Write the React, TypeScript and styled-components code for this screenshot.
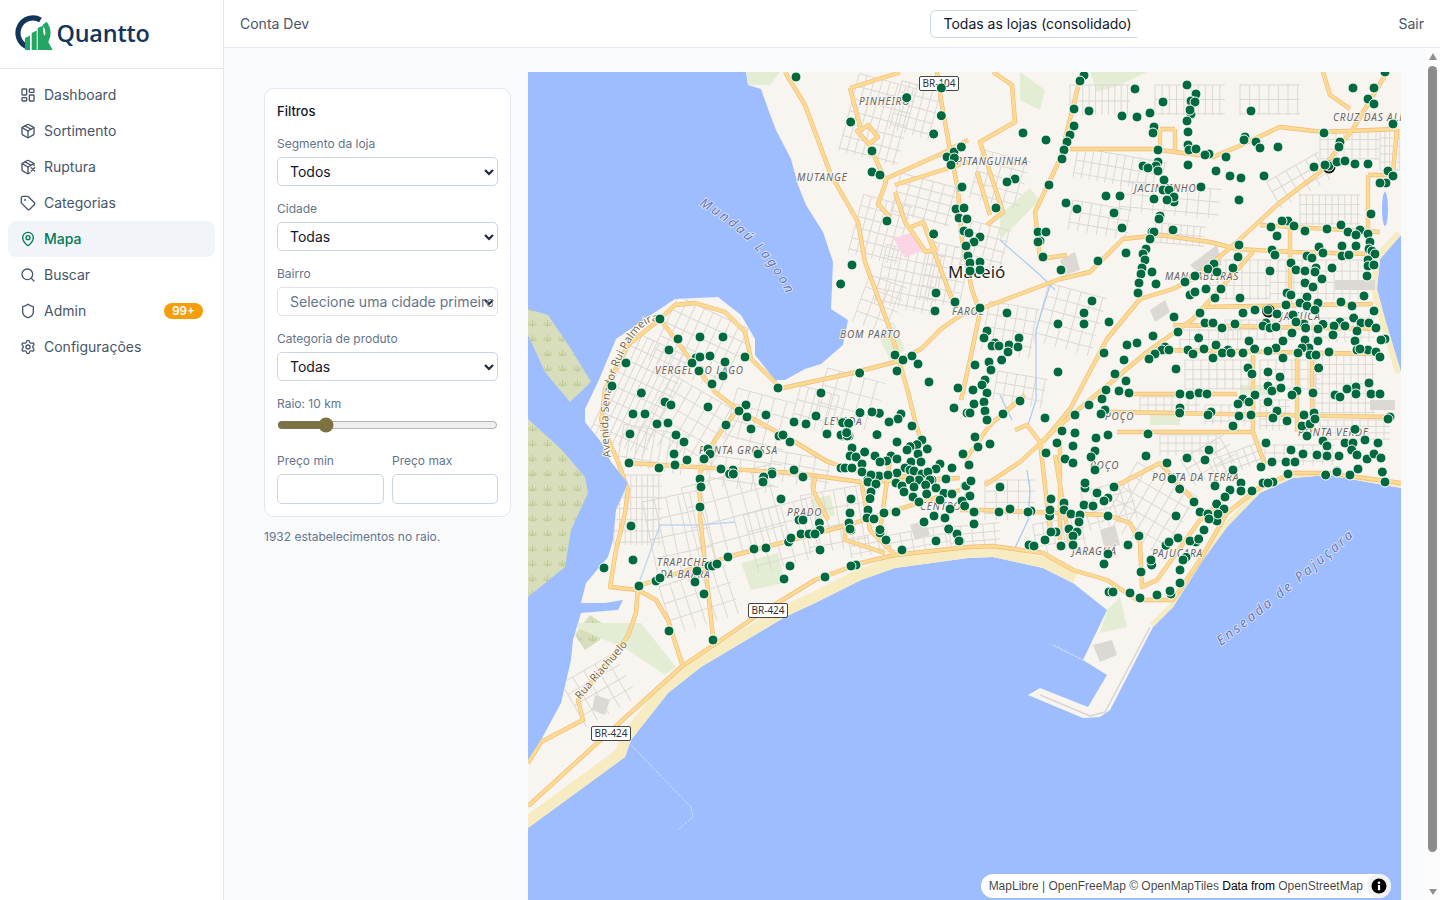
import React, { useMemo } from "react";
import styled, { createGlobalStyle } from "styled-components";
import { LayoutDashboard, Package, PackageX, Tag, MapPin, Search, Shield, Settings } from "lucide-react";

const chevron = `url("data:image/svg+xml,%3Csvg xmlns='http://www.w3.org/2000/svg' width='12' height='12' viewBox='0 0 12 12'%3E%3Cpath d='M2 4l4 4 4-4' fill='none' stroke='%231e293b' stroke-width='2.2'/%3E%3C/svg%3E")`;

const Global = createGlobalStyle`
  html, body { margin: 0; height: 100%; overflow: hidden; }
  body { font-family: Inter, "Liberation Sans", sans-serif; background: #f8fafc; color: #0f172a; }
  #root { height: 100vh; }
  * { box-sizing: border-box; }
`;

const Shell = styled.div`display: flex; height: 100vh;`;
const Sidebar = styled.aside`
  width: 224px; flex: none; background: #fff; border-right: 1px solid #e2e8f0;
`;
const Brand = styled.div`
  height: 69px; border-bottom: 1px solid #e2e8f0; display: flex; align-items: center; padding: 0 0 2px 14px; gap: 3px;
`;
const BrandName = styled.span`
  font-family: "Open Sans", Inter, sans-serif; font-weight: 600; font-size: 23.4px; color: #12355b; letter-spacing: -0.2px; margin-left: -0.5px;
`;
const Nav = styled.nav`display: flex; flex-direction: column; padding: 8px;`;
const NavItem = styled.a<{ $active?: boolean }>`
  height: 36px; display: flex; align-items: center; gap: 8px; padding: 0 12px; border-radius: 8px;
  font-size: 14px; color: ${p => (p.$active ? "#047857" : "#475569")}; font-weight: ${p => (p.$active ? 500 : 400)};
  background: ${p => (p.$active ? "#f1f5f9" : "transparent")};
`;
const NavLabel = styled.span`margin-bottom: 2px;`;
const Badge = styled.span`
  margin-left: auto; background: #f59e0b; color: #fff; font-size: 11.5px; font-weight: 600; line-height: 16px;
  height: 16px; width: 39px; border-radius: 8px; text-align: center;
`;
const Column = styled.div`position: relative; flex: 1; min-width: 0; display: flex; flex-direction: column;`;
const Header = styled.header`
  height: 48px; flex: none; background: #fff; border-bottom: 1px solid #e2e8f0; display: flex; align-items: center; padding: 0 16px;
  font-size: 14px; color: #475569;
`;
const StoreClip = styled.div`margin-left: auto; margin-right: 261px; width: 207px; overflow: hidden; height: 28px;`;
const StoreBox = styled.div`
  width: 240px; height: 28px; border: 1px solid #cbd5e1; border-radius: 6px; padding: 0 12px; line-height: 26px;
  font-size: 14px; color: #0f172a; white-space: nowrap; background: #fff;
`;
const Main = styled.main`flex: 1; min-height: 0; overflow: hidden;`;
const Content = styled.div`display: flex; align-items: flex-start; gap: 17px; padding: 24px 24px 29px 40px;`;
const Aside = styled.div`width: 247px; flex: none; margin-top: 16px;`;
const Card = styled.section`
  background: #fff; border: 1px solid #e2e8f0; border-radius: 10px; padding: 12px; height: 429px;
`;
const CardTitle = styled.div`font-size: 13px; font-weight: 500; color: #0f172a; line-height: 20px; margin: 0 0 15px;`;
const Field = styled.label`display: block; margin-bottom: 15px;`;
const FieldLabel = styled.div`font-size: 12px; color: #64748b; line-height: 16px; margin-bottom: 5px;`;
const Select = styled.select`
  display: block; width: 100%; height: 29px; border: 1px solid #cbd5e1; border-radius: 5px; padding: 0 4px 0 12px;
  font: 400 14px Inter, sans-serif; color: #0f172a; opacity: 1; appearance: none;
  background: #fff ${chevron} no-repeat right 2px center;
  &:disabled { color: #64748b; border-color: #dde3ea; }
`;
const Range = styled.input`display: block; width: 100%; margin: 5px 0 0; height: 16px; accent-color: #7d7340;`;
const PriceRow = styled.div`display: grid; grid-template-columns: 107px 106px; gap: 8px; margin-top: 20px;`;
const PriceInput = styled.input`
  display: block; width: 100%; height: 30px; border: 1px solid #cbd5e1; border-radius: 5px; background: #fff;
`;
const Note = styled.p`font-size: 12px; color: #64748b; margin: 12px 0 0; line-height: 16px;`;
const MapFrame = styled.div`position: relative; width: 873px; flex: none; height: 836px; overflow: hidden; background: #9ebdff;`;
const MapSvg = styled.svg`display: block; width: 873px; height: 836px;`;
const Attribution = styled.div`
  position: absolute; right: 10px; bottom: 10px; height: 24px; border-radius: 12px; background: #fff; display: flex; align-items: center;
  padding-left: 8px; font: 12px/20px "Liberation Sans", Arial, sans-serif; color: rgba(0,0,0,.75); white-space: pre;
`;
const Strong = styled.span`color: #000;`;
const InfoButton = styled.span`
  width: 24px; height: 24px; border-radius: 50%; margin-left: 4px; background: #f2f2f2; display: flex; align-items: center; justify-content: center;
`;
const Scrollbar = styled.div`
  position: absolute; top: 48px; right: 0; bottom: 0; width: 15px; background: #fcfcfc;
  display: flex; flex-direction: column; align-items: center;
`;
const ScrollArrow = styled.span<{ $down?: boolean }>`
  width: 0; height: 0; flex: none; margin: ${p => (p.$down ? "auto 0 5px" : "5px 0 6px")};
  border-left: 4.5px solid transparent; border-right: 4.5px solid transparent;
  ${p => (p.$down ? "border-top: 6px solid #8f8f8f;" : "border-bottom: 7px solid #8f8f8f;")}
`;
const ScrollThumb = styled.span`width: 9px; height: 786px; flex: none; border-radius: 5px; background: #8c8c8c;`;

const navItems = [
  { label: "Dashboard", Icon: LayoutDashboard },
  { label: "Sortimento", Icon: Package },
  { label: "Ruptura", Icon: PackageX },
  { label: "Categorias", Icon: Tag },
  { label: "Mapa", Icon: MapPin, active: true },
  { label: "Buscar", Icon: Search },
  { label: "Admin", Icon: Shield, badge: "99+" },
  { label: "Configurações", Icon: Settings },
];

const Logo = () => (
  <svg width="40" height="40" viewBox="0 0 40 40">
    <path d="M12.7 33.6A15 15 0 1 1 26.5 7" fill="none" stroke="#12355b" strokeWidth="5.2" />
    <path d="M30.5 10.4A15 15 0 0 1 30.5 29.6" fill="none" stroke="#22a565" strokeWidth="5.2" />
    <path d="M11 37V25l5-2.5V37zM17.7 37V20l5-2.5V37zM23.7 37V15l5.6-2.5V20L38.7 37H29.3z" fill="#22a565" />
  </svg>
);

const street: [number, number, number, number, number, number, number][] = [
  [640,395,60,110,25,8,18],[700,345,80,70,25,12,18],[690,425,80,70,30,14,18],[655,450,70,40,10,10,40],
  [638,510,48,70,0,7,14],[680,535,60,80,-12,15,24],[735,515,90,80,-15,18,26],[785,535,70,60,-15,16,22],[700,600,70,50,-18,14,22],[835,520,60,60,-10,14,22],
  [760,420,60,50,15,16,20],[800,470,60,30,10,18,14],[745,475,70,30,8,18,14],[850,400,60,50,15,16,22],[815,410,40,40,15,10,18],
  [878,120,60,80,15,10,16],[915,110,40,50,15,10,14],[880,230,50,60,15,10,14],[925,200,60,40,15,14,12],[910,280,60,60,12,10,14],[945,275,40,60,12,10,14],[880,305,40,50,20,14,16],
  [1000,180,50,50,15,14,14],[985,250,40,50,15,12,14],[1100,100,60,30,0,8,20],[1190,100,70,30,0,9,18],[1120,170,90,30,10,10,16],[1170,200,100,30,5,14,16],[1270,100,60,30,0,12,18],
  [1100,220,60,30,10,12,14],[1070,320,60,60,15,14,16],[1010,330,50,50,10,12,16],[1020,390,50,30,10,12,14],[1180,235,50,20,5,8,12],
  [1330,210,60,30,0,8,12],[1300,180,60,30,-30,14,14],[1390,150,20,40,0,6,10],[1350,145,60,30,0,10,12],
  [1320,280,100,40,0,10,14],[1240,280,60,40,0,10,16],[1260,330,70,20,0,10,12],[1340,330,70,24,0,10,12],[1210,340,60,20,0,12,12],
  [1220,375,70,30,0,10,12],[1290,375,60,30,0,10,12],[1345,385,60,60,0,9,12],[1170,405,60,16,0,10,10],[1230,415,50,20,0,10,10],[1275,415,30,30,0,8,8],[1355,430,70,20,0,10,8],
  [1210,460,50,30,-30,14,14],[1150,510,70,70,30,14,18],[1190,445,60,20,0,10,10],[1110,505,50,40,-15,12,14],[1060,535,50,30,-10,12,14],[1010,500,50,40,0,14,14],
  [1240,460,50,20,-20,10,10],[1300,455,70,20,0,12,10],[920,540,60,20,-10,14,10],[975,535,50,20,-5,14,10],[600,690,60,50,-30,16,16],[870,545,40,20,-10,12,10],
];

const streetPaths = () =>
  street.map(([cx, cy, w, h, a, sx, sy], i) => {
    let d = "";
    for (let x = -w / 2; x <= w / 2; x += sx * 0.8) d += `M${x} ${-h / 2}V${h / 2}`;
    for (let y = -h / 2; y <= h / 2; y += sy * 0.8) d += `M${-w / 2} ${y}H${w / 2}`;
    return <path key={i} d={d} transform={`translate(${cx} ${cy}) rotate(${a})`} fill="none" stroke="#dcd8d3" strokeWidth="1" />;
  });

const primary = [
  "M785 72L805 105L831 175L858 222L865 262L891 332L908 392L916 425L925 450",
  "M937 72L941 100L950 150L958 190L962 240L972 290L980 312L970 360L961 400",
  "M850 88L895 74L900 72M850 88L861 130L857 131L869 144L878 137L868 125L861 130M869 144L886 182L878 204L890 217",
  "M885 179L941 154L968 140M895 185L968 162",
  "M895 192L905 222L926 252L935 249L923 222L911 227M923 222L953 302",
  "M778 389L848 374L895 362L921 349L941 329L961 315L980 309L1060 279L1090 272L1123 239L1160 235L1210 242L1237 249L1293 252L1370 254",
  "M1387 72L1353 129L1320 172L1277 205L1237 242L1193 279L1173 289L1140 299L1107 339L1070 409L1043 442",
  "M1253 252L1193 319L1147 352L1103 389L1060 425L1020 462L985 485",
  "M1203 307L1373 304M1173 325L1377 329M1157 350L1383 354M1133 394L1237 394M1110 412L1387 417M1117 432L1243 432L1253 432",
  "M1253 355V432L1265 465M1297 352V432M1312 355V432M1290 229V305",
  "M1070 149H1160M1160 129V150M1175 129V150M1160 129H1175M1160 150L1213 157L1237 147L1280 127L1323 132L1397 129",
  "M1080 79L1060 159L1035 212L1040 259L1067 255",
  "M1323 72L1330 95L1350 109M1260 225L1380 232M1368 175V229M1368 175H1395M1397 129L1393 172",
  "M993 72L1012 85L1015 122L980 142L1003 212L987 225M977 172L990 215",
  "M660 319L675 305L695 303L725 312L745 332L751 359L775 382L778 389",
  "M660 319L715 392L741 412L795 442L828 462L861 472L940 480",
  "M660 319L628 345L605 389L601 422L618 462L628 490L625 513L616 550L610 587L638 590L656 600L668 620L683 667",
  "M638 586L636 613L628 636L578 700L583 720L541 742L528 763",
  "M638 586L728 557L848 525L960 490",
  "M628 463L795 473L861 482L960 478",
  "M700 473L700 517L713 637",
  "M528 806L681 667L761 613L815 580L861 563L895 555L968 547L993 546L1043 553L1073 570L1107 580L1137 600L1173 600L1200 560L1227 513L1260 487L1293 473L1327 473L1401 483",
  "M960 510L980 510L1107 515L1130 523L1140 543L1142 587L1157 580L1200 520L1230 493",
  "M1114 487L1160 463L1193 500",
  "M815 478L813 490L828 520M845 525L845 540L885 553M861 480L870 530L895 555M890 460L880 530",
  "M1015 430L1027 425L1040 442L1050 530M1060 440L1060 540M1055 455L1070 545",
  "M741 405L715 440L700 473",
  "M1025 395L990 425L965 460",
];

const dotSets: [number, number, string][] = [
  [528, 72, "804,15 1240,48 1136,77 1240,131 968,150 1217,186 1299,225 1278,240 1257,255 1279,258 1269,279 1032,237 1032,300 1056,309 1299,347 1077,447 1284,411 1308,408 1293,438 1315,441 1305,477 1317,483 1217,486 1314,522 1317,552 972,579 938,636 1224,663 1281,690 1221,717 396,741 450,801 516,795 585,795 423,834 504,858 516,855 546,852 651,855 492,873 591,870 513,897 585,912 294,873 252,942 552,936 750,948 995,903 1107,897 1101,849 1125,864 1152,852 1170,876 1203,930 1290,948 879,963 340,963 411,990 429,999 654,999 540,1005 633,1017 657,1035 714,1029 315,1026 351,1026 864,1032 996,1023 1032,1020 1053,1023 1119,1026 1110,1041 1083,1050 1152,1062 1278,1008 1317,1023 387,1056 420,1053 594,1059 669,1071 798,1050 834,1056 945,1053 963,1056 306,1086 444,1089 468,1110 753,1092 765,1089 786,1110 897,1086 942,1092 963,1092 957,1083 1047,1089 1107,1110 438,1146 540,1131 546,1146 690,1146 528,1161 477,1164 303,1173 393,1188 441,1179 579,1191 615,1194 732,1200 798,1194"],
  [960, 72, "372,10 360,27 525,51 681,39 708,66 693,87 705,90 609,90 342,111 387,117 486,132 531,135 570,123 693,126 690,114 681,147 873,117 1179,48 1242,48 1275,0 1224,81 1242,96 342,162 582,165 579,183 684,180 330,189 321,210 189,183 258,204 312,234 306,261 684,219 687,234 708,231 747,246 735,249 594,234 798,255 855,195 852,204 888,210 900,228 954,225 1092,183 1299,156 1140,210 1137,225 684,279 594,270 588,282 549,282 564,288 594,297 612,324 768,297 810,312 843,318 912,312 1062,285 1107,282 1095,279 1131,270 1155,267 1185,276 1224,276 1284,297 1299,312 1278,333 1260,333 165,321 141,330 267,339 4,225 6,345 723,345 609,354 627,354 438,372 480,372 582,381 642,390 642,375 621,384 837,384 318,393 351,411 108,408 12,408 462,423 1233,426 600,432 597,441 21,441 984,447 966,447 1002,462 933,465 1143,459 1101,471 1035,477 486,468 639,474 576,480 582,480 234,480 258,480 12,477 27,483 60,495 951,492 1164,480 1200,474 1188,489 1224,486 1230,510 570,501 240,507 234,510 42,510 18,522 837,519 1077,525 1146,522 1188,522 1227,531 1236,537 558,531 936,534 945,549 1089,543 1041,552 1056,558 1146,552 1167,549 1245,546 1224,564 498,543 549,546 249,555 834,555 24,552 414,567 555,564 993,573 1068,588 762,576 30,573 60,570 303,594 546,588 1116,588 1224,582 1242,579 819,588 744,591 576,600 771,600 60,594 30,597 543,606 1008,594 1035,597 930,597 1065,600 1221,612 705,612 1086,621 675,630 537,633 588,636 1035,633 1059,645 783,651 738,651 690,669 705,660 534,663 981,663 993,669 765,678 840,678 1212,672 1041,675 396,687 1020,693 1074,693 1143,690 1176,702 978,699 1041,702 60,708 885,714 924,714 1065,714 1242,717 141,723 720,723 372,723 849,723 999,729 951,726 1181,738 642,735 447,750 294,756 372,756 735,753 759,753 825,756 918,753 1032,756 1140,750 1008,750 1089,757 1155,762 1203,753 1227,753 786,768 909,762 930,768 948,765 1248,768 1122,762 1037,768 1074,771 81,777 654,780 1191,777 996,783 1119,789 579,792 177,798 72,798 716,798 1035,804 1185,807 1275,801 1263,804 969,807 1074,807 867,807 105,813 531,813 501,819 147,819 96,822 117,822 174,825 768,819 615,825 732,831 804,834 684,834 144,840 606,834 627,834 1047,828 1026,828 948,828 924,837 884,831 849,843 1107,840 1191,834 1224,834 1248,840 1200,831 1014,843 1050,849 1068,849 432,843 585,846 699,846 787,843 813,843 969,858 759,858 1260,855 125,864 567,861 492,864 87,870 45,879 864,888 1076,888 648,891 93,894 294,900 465,906 924,900 876,906 960,915 498,927 75,924 66,939 1227,933 924,942 1188,945 438,954 39,954 936,957 963,948 1161,951 477,957 507,963 660,966 690,969 717,963 741,966 1011,957 1059,963 1125,969 1140,975 1188,966 1233,966 1260,966 81,963 885,969 996,969 426,981 849,981 72,990 834,996 867,990 924,990 387,999 42,996 180,987 660,1008 435,1014 75,1017 951,1017 30,1023 129,1026 659,1023 753,1020 345,1029 423,1026 744,1029 837,1032 873,1029 1032,1029 1062,1023 255,1038 82,1044 939,1038 981,1047 1290,1035 1284,1041 1026,1062 1050,1056 819,1062 1065,1041 1185,1072 306,1077 345,1083 564,1086 444,1089 45,1095 408,1098 1041,1092 1089,1107 1215,1104 918,1113 291,1113 54,1125 90,1116 339,1122 1155,1113 1179,1113 1254,1113 993,1134 1101,1122 405,1137 747,1134 1175,1134 258,1143 9,1146 1029,1146 1071,1149 1101,1152 1137,1152 1221,1161 1191,1149 1242,1146 1263,1158 558,1152 393,1155 681,1158 621,1173 735,1164 315,1161 339,1173 27,1179 936,1170 978,1170 1005,1170 903,1185 819,1194 1131,1197 1194,1191 405,1194"],
  [960, 440, "33,123 15,138 120,141 375,144 375,129 462,141 636,117 659,147 411,159 765,138 444,174 432,183 273,177 312,189 372,195 399,198 843,129 843,153 876,153 909,129 939,126 924,129 984,102 1097,105 1131,96 1170,105 1267,96 1275,126 27,168 8,183 45,216 117,216 150,207 213,213 204,216 269,228 270,210 312,210 333,222 360,225 702,186 720,216 810,150 795,171 770,192 792,207 744,222 771,243 747,237 774,222 444,228 648,228 357,246 42,252 288,276 273,276 327,267 351,276 339,288 537,288 654,294 618,316 627,306 708,306 690,303 716,297 732,270 255,300 303,318 339,315 207,315 222,318 504,315 444,342 575,375 573,360 678,352 669,360 432,372 660,390 543,396 660,429 633,462 630,453 591,465 510,459 540,474 447,456 459,456 0,303"],
  [528, 440, "605,102 616,102 732,102 707,111 705,126 825,111 516,117 519,141 759,177 969,177 516,201 1019,120 1044,132 1020,216 966,219 813,240 825,240 874,249 963,249 1038,237 1068,219 1104,216 1188,246 1218,228 1251,234 309,258 969,270 876,270 1056,279 1074,300 819,282 843,282 861,282 782,306 789,294 1263,270 1287,282 1293,303 1224,303 678,327 714,324 876,330 1122,330 600,351 543,378 553,378 567,372 315,360 786,378 984,375 969,378 228,384 507,393 384,423 396,414 501,426 333,438 528,462 768,417 891,411 423,573 555,600"],
  [830, 400, "90,38 148,40 126,36 213,42 204,57 177,66 246,78 38,68 56,70 33,105 52,108 50,98 141,104 201,126 276,120 261,134 292,147 240,140 231,150 66,144 104,156 60,168 78,171 135,168 264,162 183,168 170,183 150,186 201,177 243,186 273,186 96,192 330,192 366,204 33,204 45,204 66,204 96,216 225,204 240,210 252,213 276,222 318,207 294,216 201,219 147,228 174,225 123,225 114,246 138,252 348,237 267,240 306,240 300,240 240,240 198,249 216,258 252,261 287,255 318,264 342,280 222,276 249,291 290,282 330,300 366,282 420,288 396,303 404,318 432,336 360,327 267,306 63,297 123,276 120,296 114,330 60,339 111,354 132,357 162,339 198,336 57,369 282,366 312,348 345,354 432,372 356,387 150,389 60,387 408,258 423,243 417,195 399,162 444,141 435,111 372,24 432,12 462,6 420,39 465,33 471,60"],
];

const land = "M746 72L748 85L761 89L768 109L776 130L791 159L798 185L806 205L823 232L833 262L831 309L848 320L843 345L821 364L805 369L785 380L775 380L755 355L755 339L741 315L718 297L675 299L648 317L616 339L598 382L585 409L585 422L601 442L611 462L628 483L616 510L613 540L608 557L586 583L581 603L605 603L623 600L618 610L581 613L573 640L571 660L561 703L541 740L528 760L528 828L625 757L631 740L668 693L701 667L785 617L815 603L861 580L895 568L968 558L993 557L1043 568L1073 583L1107 610L1083 660L1107 675L1088 707L1040 688L1028 695L1083 718L1100 717L1110 710L1153 627L1173 607L1203 560L1227 527L1260 493L1293 478L1327 475L1401 488L1401 372L1385 319L1377 289L1380 259L1401 235L1401 72Z";

const places: [string, number, number][] = [
  ["PINHEIRO",859,105],["MUTANGE",797,181],["PITANGUINHA",956,165],["BOM PARTO",840,338],["VERGEL DO LAGO",655,374],["PONTA GROSSA",699,454],["LEVADA",824,425],["FAROL",952,315],["JACINTINHO",1134,192],["CRUZ DAS ALMAS",1333,121],["MANGABEIRAS",1165,280],["JATIÚCA",1280,320],["POÇO",1105,420],["PRADO",787,516],["CENTRO",920,510],["TRAPICHE",657,566],["DA BARRA",660,578],["POÇO",1090,469],["PONTA DA TERRA",1152,481],["JARAGUÁ",1072,555],["PAJUÇARA",1152,557],["PONTA VERDE",1298,436],
];

const CityMap = () => {
  const dots = useMemo(() => {
    const out: [number, number][] = [];
    for (const [ox, oy, s] of dotSets) {
      for (const p of s.split(" ")) {
        const [a, b] = p.split(",").map(Number);
        out.push([ox + a / 3, oy + b / 3]);
      }
    }
    return out;
  }, []);
  return (
    <MapSvg viewBox="528 72 873 836">
      <defs>
        <clipPath id="land"><path d={land} /></clipPath>
        <pattern id="wet" width="15" height="15" patternUnits="userSpaceOnUse">
          <rect width="15" height="15" fill="#d8debb" />
          <path d="M7.5 11V5M7.5 11L4 7M7.5 11L11 7M7.5 11L3 9.5M7.5 11L12 9.5" stroke="#bccb94" strokeWidth="1" fill="none" />
        </pattern>
        <path id="lagoonPath" d="M699 205Q768 245 792 307" />
        <path id="bayPath" d="M1221 646Q1293 590 1361 530" />
        <path id="avPath" d="M611 457Q602 400 622 358T662 322" />
        <path id="ruaPath" d="M580 700L632 640" />
      </defs>
      <rect x="528" y="72" width="873" height="836" fill="#9ebdff" />
      <path d={land} fill="#f8f5f1" />
      <path d="M528 309L548 315L571 349L591 382L570 402L545 372L528 335Z" fill="url(#wet)" />
      <path d="M528 419L561 449L585 477L588 493L571 530L565 567L528 597Z" fill="url(#wet)" />
      <path d="M581 626L590 615L605 625L600 640L585 650L575 635Z" fill="url(#wet)" />
      <g clipPath="url(#land)">
        <path d="M528 828L625 757L631 740L668 693L701 667L785 617L815 603L861 580L895 568L968 558L993 557L1043 568L1073 583" fill="none" stroke="#f6ebc1" strokeWidth="22" />
        <path d="M1153 627L1173 607L1203 560L1227 527L1260 493L1293 478L1327 475L1401 488" fill="none" stroke="#f6ebc1" strokeWidth="9" />
        <path d="M1401 372L1385 319L1377 289L1380 259L1401 235" fill="none" stroke="#f6ebc1" strokeWidth="12" />
        <g fill="#e3edd3">
          <path d="M575 623L641 623L676 667L665 675L628 650L605 640L575 627Z" />
          <path d="M741 563L778 553L785 583L751 590Z" />
          <path d="M1120 597L1127 627L1100 633L1107 610Z" />
          <path d="M1090 72L1147 72L1120 85L1097 92Z" />
          <path d="M1020 72L1045 90L1040 110L1020 100Z" />
          <path d="M1000 240L1040 200L1030 188L1000 215Z" />
          <path d="M746 72L780 72L770 85L748 85Z" />
          <path d="M880 340L895 325L905 350L890 360Z" />
          <path d="M1240 385H1280V395H1240Z" />
          <path d="M810 500L830 495L835 515L815 520Z" />
          <path d="M1150 410H1180V425H1150Z" />
        </g>
        <g>{streetPaths()}</g>
        <g fill="#dcd8d4">
          <path d="M1190 265L1217 245L1222 265L1200 275Z" />
          <path d="M1093 645L1112 640L1117 655L1100 662Z" />
          <path d="M1150 310L1165 300L1170 312L1155 322Z" />
          <path d="M1060 260L1075 252L1080 270L1065 275Z" />
          <path d="M1335 280H1375V290H1335Z" />
          <path d="M1370 400H1395V410H1370Z" />
          <path d="M595 695L610 700L605 715L592 710Z" />
          <path d="M1100 530L1115 525L1120 545L1105 550Z" />
          <path d="M910 525L925 520L930 535L915 540Z" />
        </g>
        <path d="M893 238L915 232L922 250L905 258Z" fill="#fbd5e6" />
        <path d="M685 570L695 567L698 578L688 582Z" fill="#fbd5e6" />
        <path d="M1150 627L1105 712L1090 716L1040 695" fill="none" stroke="#d9d6d1" strokeWidth="1.5" />
        <path d="M1000 240L1040 275L1055 290M1050 285L1036 330V400L1028 425M1000 395L1012 420" fill="none" stroke="#a8cdf3" strokeWidth="1.3" />
        <path d="M1014 550L1028 520L1030 490L1027 470" fill="none" stroke="#a8cdf3" strokeWidth="1.3" />
        <path d="M640 580L660 525L700 525L735 522" fill="none" stroke="#b9d6f4" strokeWidth="1.3" />
        <g fill="none" strokeLinejoin="round">
          {primary.map((d, i) => <path key={`c${i}`} d={d} stroke="#f0bb75" strokeWidth="4.4" />)}
          {primary.map((d, i) => <path key={`f${i}`} d={d} stroke="#fcda93" strokeWidth="3.2" />)}
        </g>
      </g>
      <ellipse cx="1385" cy="209" rx="3" ry="17" fill="#9ebdff" />
      <path d="M631 745L691 807L693 817L678 830" fill="none" stroke="#d3dcf2" strokeWidth="1" strokeDasharray="3 1" />
      <path d="M1053 645L1083 660" fill="none" stroke="#d3dcf2" strokeWidth="1.2" strokeDasharray="3 1" />
      <g fontFamily="'Noto Sans', sans-serif" fontStyle="italic" fontSize="10" letterSpacing="0.9" fill="#666" stroke="#f8f5f1" strokeWidth="2" paintOrder="stroke">
        {places.map(([t, x, y], i) => <text key={i} x={x} y={y}>{t}</text>)}
      </g>
      <g fontFamily="'Noto Sans', sans-serif" fontStyle="italic" fontSize="13" letterSpacing="2.6" fill="#6877ad" stroke="#dfe6fb" strokeWidth="1.6" paintOrder="stroke">
        <text><textPath href="#lagoonPath">Mundaú Lagoon</textPath></text>
        <text fontSize="13.5"><textPath href="#bayPath">Enseada de Pajuçara</textPath></text>
      </g>
      <g fontFamily="'Noto Sans', sans-serif" fontSize="11" fill="#7b6a45" stroke="#fff" strokeWidth="1.6" paintOrder="stroke">
        <text><textPath href="#avPath">Avenida Senador Rui Palmeira</textPath></text>
        <text><textPath href="#ruaPath">Rua Riachuelo</textPath></text>
      </g>
      <text x="948" y="278" fontFamily="'Noto Sans', sans-serif" fontSize="17" fill="#222" stroke="#fff" strokeWidth="2" paintOrder="stroke">Maceió</text>
      {[[919, 76, "BR-104"], [748, 603, "BR-424"], [591, 726, "BR-424"]].map(([x, y, t]) => (
        <g key={`${x}`}>
          <rect x={Number(x) + 0.5} y={Number(y) + 0.5} width="39" height="14" rx="1.5" fill="#fff" stroke="#444" />
          <text x={Number(x) + 20} y={Number(y) + 11} textAnchor="middle" fontFamily="'Noto Sans', sans-serif" fontSize="10" fill="#333">{t}</text>
        </g>
      ))}
      <circle cx="1329" cy="167" r="6.5" fill="#111" />
      <circle cx="1268.5" cy="311" r="6.5" fill="#111" />
      <g fill="#00693e" stroke="#fff" strokeWidth="1">
        {dots.map(([x, y], i) => <circle key={i} cx={x} cy={y} r="5" />)}
      </g>
    </MapSvg>
  );
};

const FilterSelect = ({ label, value, disabled }: { label: string; value: string; disabled?: boolean }) => (
  <Field>
    <FieldLabel>{label}</FieldLabel>
    <Select disabled={disabled} defaultValue={value}><option>{value}</option></Select>
  </Field>
);

export default function App() {
  return (
    <Shell>
      <Global />
      <Sidebar>
        <Brand><Logo /><BrandName>Quantto</BrandName></Brand>
        <Nav>
          {navItems.map(({ label, Icon, active, badge }) => (
            <NavItem key={label} $active={active}>
              <Icon size={16} />
              <NavLabel>{label}</NavLabel>
              {badge && <Badge>{badge}</Badge>}
            </NavItem>
          ))}
        </Nav>
      </Sidebar>
      <Column>
        <Header>
          <span>Conta Dev</span>
          <StoreClip><StoreBox>Todas as lojas (consolidado)</StoreBox></StoreClip>
          <span>Sair</span>
        </Header>
        <Main>
          <Content>
            <Aside>
              <Card>
                <CardTitle>Filtros</CardTitle>
                <FilterSelect label="Segmento da loja" value="Todos" />
                <FilterSelect label="Cidade" value="Todas" />
                <FilterSelect label="Bairro" value="Selecione uma cidade primeiro" disabled />
                <FilterSelect label="Categoria de produto" value="Todas" />
                <FieldLabel>Raio: 10 km</FieldLabel>
                <Range type="range" min={0} max={50} defaultValue={10} readOnly />
                <PriceRow>
                  <div><FieldLabel>Preço min</FieldLabel><PriceInput /></div>
                  <div><FieldLabel>Preço max</FieldLabel><PriceInput /></div>
                </PriceRow>
              </Card>
              <Note>1932 estabelecimentos no raio.</Note>
            </Aside>
            <MapFrame>
              <CityMap />
              <Attribution>
                MapLibre | OpenFreeMap © OpenMapTiles <Strong>Data from</Strong> OpenStreetMap
                <InfoButton>
                  <svg width="16" height="16" viewBox="0 0 16 16">
                    <circle cx="8" cy="8" r="7.5" fill="#000" />
                    <rect x="6.9" y="7" width="2.2" height="5.2" fill="#fff" />
                    <circle cx="8" cy="4.8" r="1.3" fill="#fff" />
                  </svg>
                </InfoButton>
              </Attribution>
            </MapFrame>
          </Content>
        </Main>
        <Scrollbar>
          <ScrollArrow />
          <ScrollThumb />
          <ScrollArrow $down />
        </Scrollbar>
      </Column>
    </Shell>
  );
}
